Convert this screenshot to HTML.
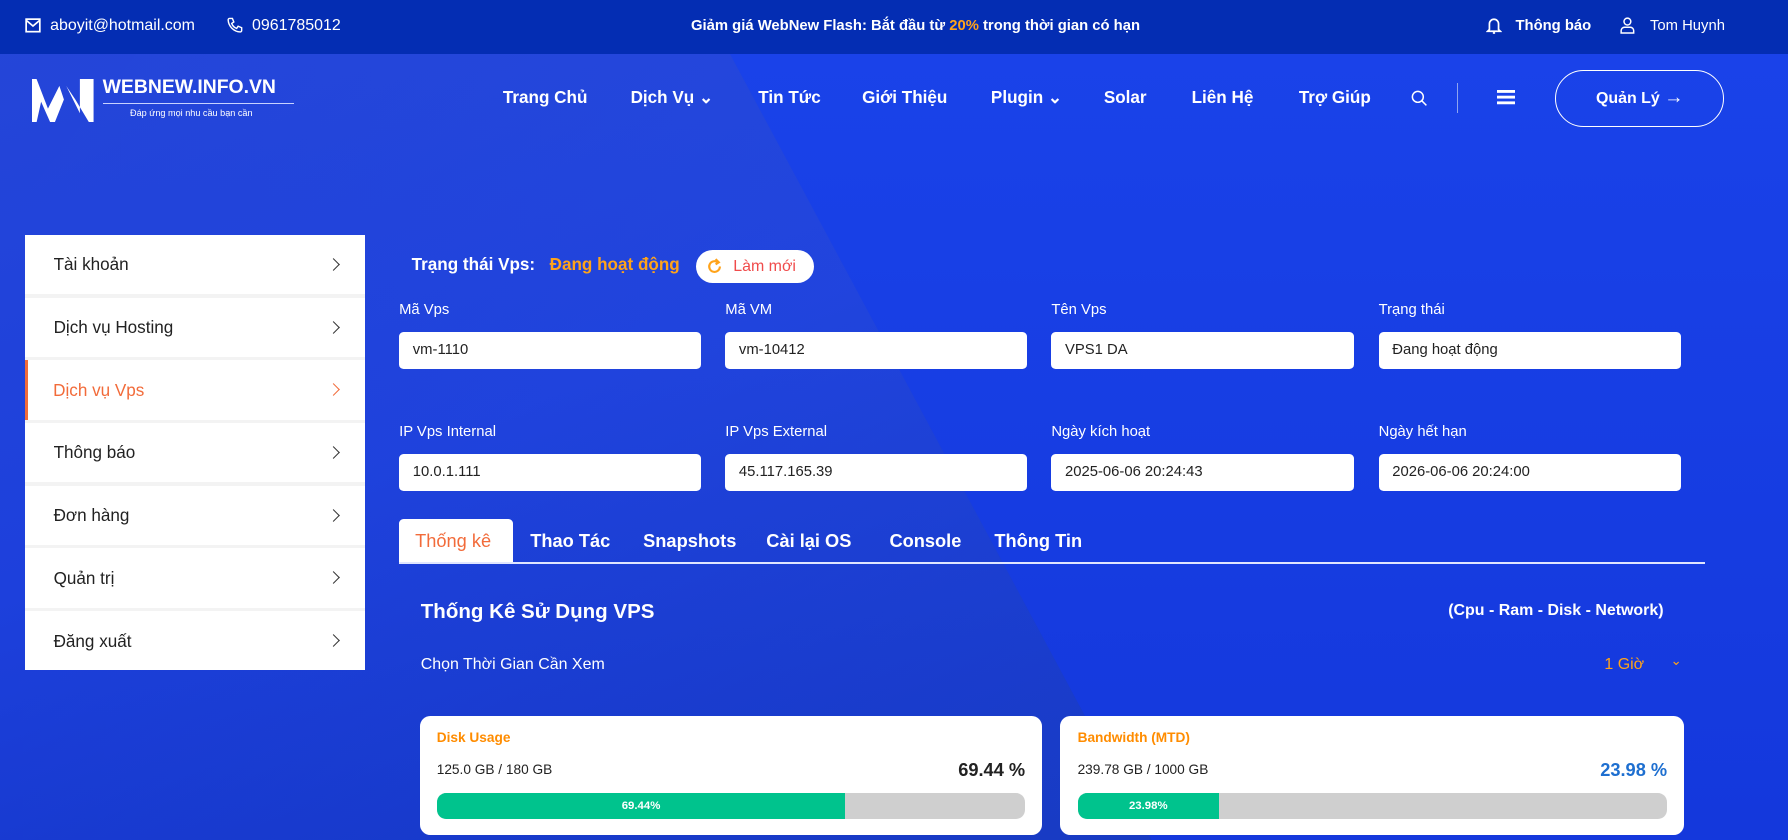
<!DOCTYPE html>
<html><head><meta charset="utf-8"><style>
*{margin:0;padding:0;box-sizing:border-box}
html,body{width:1788px;height:840px;overflow:hidden;background:#1a3cd8}
#w{zoom:1.14031;width:1568px;height:737px;position:relative;overflow:hidden;font-family:"Liberation Sans",sans-serif;color:#fff;
background:linear-gradient(160deg,#2546d8 0%,#1d40dc 40%,#1436c8 70%,#0f31b0 100%)}
.a{position:absolute;white-space:nowrap}
#band{position:absolute;left:0;top:0;width:1568px;height:737px;background:linear-gradient(90deg,rgba(60,100,230,.0),rgba(70,110,235,.2));clip-path:polygon(120px 47px,640px 47px,1010px 737px,0 737px,0 200px)}
#rt{position:absolute;left:0;top:0;width:1568px;height:737px;background:linear-gradient(180deg,#1a43ea,#1438dc);clip-path:polygon(640px 47px,1568px 47px,1568px 737px,1010px 737px)}
#top{position:absolute;left:0;top:0;width:1568px;height:47px;background:#042db3;font-size:14px}
.nav{font-size:15px;font-weight:bold;top:77px}
.side{position:absolute;left:22px;top:206px;width:298px;background:#f3f3f3}
.side div{height:52px;background:#fff;margin-bottom:3px;position:relative;font-size:15px;color:#222;padding:18px 0 0 25px}
.side div:last-child{margin-bottom:0}
.side div::after{content:"";position:absolute;right:24px;top:22px;width:7px;height:7px;border-right:1.6px solid #333;border-top:1.6px solid #333;transform:rotate(45deg)}
.side .act{color:#f26b3a;border-left:3px solid #f26b3a;padding-left:22px}
.side .act::after{border-color:#f26b3a}
.lb{font-size:13px}
.in{position:absolute;height:33px;background:#fff;border-radius:4px;color:#222;font-size:13px;padding:9px 0 0 12px;width:265px}
.tab{font-size:16px;font-weight:bold;top:465px}
.card{position:absolute;top:628px;height:104px;background:#fff;border-radius:9px;color:#222}
.bar{position:absolute;left:15px;right:15px;top:67px;height:23px;background:#cfcfcf;border-radius:8px;overflow:hidden}
.bar span{position:absolute;left:0;top:0;height:23px;background:#00c38d;color:#fff;font-size:10px;font-weight:bold;text-align:center;line-height:23px}
</style></head><body><div id="w">
<div id="band"></div><div id="rt"></div>
<div id="top">
<svg class="a" style="left:22px;top:16px" width="14" height="13" viewBox="0 0 14 13"><rect x="1" y="1" width="12" height="11" fill="none" stroke="#fff" stroke-width="1.5"/><path d="M1 2l6 5 6-5" fill="none" stroke="#fff" stroke-width="1.5"/></svg>
<div class="a" style="left:44px;top:15px">aboyit@hotmail.com</div>
<svg class="a" style="left:198px;top:15px" width="15" height="15" viewBox="0 0 24 24"><path d="M5 2h4l2 5-3 2a11 11 0 0 0 7 7l2-3 5 2v4a2 2 0 0 1-2 2A18 18 0 0 1 3 4a2 2 0 0 1 2-2z" fill="none" stroke="#fff" stroke-width="2"/></svg>
<div class="a" style="left:221px;top:15px">0961785012</div>
<div class="a" style="left:606px;top:16px;font-weight:bold;font-size:13px">Giảm giá WebNew Flash: Bắt đầu từ <span style="color:#ffa31a">20%</span> trong thời gian có hạn</div>
<svg class="a" style="left:1303px;top:15px" width="14" height="16" viewBox="0 0 14 16"><path d="M3 11V6a4 4 0 0 1 8 0v5l1.5 1.5h-11z" fill="none" stroke="#fff" stroke-width="1.5"/><path d="M6 14h2" stroke="#fff" stroke-width="1.5"/></svg>
<div class="a" style="left:1329px;top:16px;font-weight:bold;font-size:13px">Thông báo</div>
<svg class="a" style="left:1421px;top:15px" width="13" height="15" viewBox="0 0 13 15"><circle cx="6.5" cy="4" r="3" fill="none" stroke="#fff" stroke-width="1.3"/><path d="M1 14v-2a3 3 0 0 1 3-3h5a3 3 0 0 1 3 3v2z" fill="none" stroke="#fff" stroke-width="1.3"/></svg>
<div class="a" style="left:1447px;top:16px;font-size:13px">Tom Huynh</div>
</div>
<svg class="a" style="left:28px;top:69px" width="56" height="38" viewBox="0 0 56 38"><path d="M0 0h4l10 26L24 6l4 12-8 20h-4L8 20 4 38H0z" fill="#fff"/><path d="M30 6l12 24V0h12v38h-4L38 18z" fill="#fff"/></svg>
<div class="a" style="left:90px;top:67px;font-size:17px;font-weight:bold">WEBNEW.INFO.VN</div>
<div class="a" style="left:90px;top:90px;width:168px;height:1px;background:#c8d2ff"></div>
<div class="a" style="left:114px;top:95px;font-size:8px">Đáp ứng mọi nhu cầu bạn cần</div>
<div class="a nav" style="left:441px">Trang Chủ</div>
<div class="a nav" style="left:553px">Dịch Vụ ⌄</div>
<div class="a nav" style="left:665px">Tin Tức</div>
<div class="a nav" style="left:756px">Giới Thiệu</div>
<div class="a nav" style="left:869px">Plugin ⌄</div>
<div class="a nav" style="left:968px">Solar</div>
<div class="a nav" style="left:1045px">Liên Hệ</div>
<div class="a nav" style="left:1139px">Trợ Giúp</div>
<svg class="a" style="left:1237px;top:79px" width="15" height="15" viewBox="0 0 15 15"><circle cx="6" cy="6" r="4.8" fill="none" stroke="#fff" stroke-width="1.3"/><path d="M9.5 9.5l4 4" stroke="#fff" stroke-width="1.3"/></svg>
<div class="a" style="left:1278px;top:73px;width:1px;height:26px;background:#8ea4f0"></div>
<svg class="a" style="left:1313px;top:79px" width="16" height="13"><rect y="0" width="16" height="2.5" fill="#fff"/><rect y="5" width="16" height="2.5" fill="#fff"/><rect y="10" width="16" height="2.5" fill="#fff"/></svg>
<div class="a" style="left:1364px;top:61px;width:148px;height:50px;border:1.5px solid #fff;border-radius:25px;text-align:center;line-height:47px;font-size:14px;font-weight:bold">Quản Lý <span style="font-size:17px">→</span></div>

<div class="side"><div>Tài khoản</div><div>Dịch vụ Hosting</div><div class="act">Dịch vụ Vps</div><div>Thông báo</div><div>Đơn hàng</div><div>Quản trị</div><div>Đăng xuất</div></div>

<div class="a" style="left:361px;top:224px;font-size:15px;font-weight:bold">Trạng thái Vps:</div>
<div class="a" style="left:482px;top:224px;font-size:15px;font-weight:bold;color:#ffa31a">Đang hoạt động</div>
<div class="a" style="left:610px;top:219px;width:104px;height:29px;background:#fff;border-radius:15px;color:#f04b4b;font-size:14px;padding:7px 0 0 33px">Làm mới</div>
<svg class="a" style="left:619px;top:226px" width="15" height="15" viewBox="0 0 16 16"><path d="M13 8a5 5 0 1 1-2-4" fill="none" stroke="#ffa31a" stroke-width="2"/><path d="M9 1l3 3-3 2" fill="none" stroke="#ffa31a" stroke-width="2"/></svg>

<div class="a lb" style="left:350px;top:265px">Mã Vps</div><div class="a lb" style="left:636px;top:265px">Mã VM</div><div class="a lb" style="left:922px;top:265px">Tên Vps</div><div class="a lb" style="left:1209px;top:265px">Trạng thái</div>
<div class="in" style="left:350px;top:291px">vm-1110</div><div class="in" style="left:636px;top:291px">vm-10412</div><div class="in" style="left:922px;top:291px">VPS1 DA</div><div class="in" style="left:1209px;top:291px">Đang hoạt động</div>
<div class="a lb" style="left:350px;top:372px">IP Vps Internal</div><div class="a lb" style="left:636px;top:372px">IP Vps External</div><div class="a lb" style="left:922px;top:372px">Ngày kích hoạt</div><div class="a lb" style="left:1209px;top:372px">Ngày hết hạn</div>
<div class="in" style="left:350px;top:398px">10.0.1.111</div><div class="in" style="left:636px;top:398px">45.117.165.39</div><div class="in" style="left:922px;top:398px">2025-06-06 20:24:43</div><div class="in" style="left:1209px;top:398px">2026-06-06 20:24:00</div>

<div class="a" style="left:350px;top:455px;width:100px;height:39px;background:#fff;border-radius:4px 4px 0 0"></div>
<div class="a tab" style="left:364px;color:#f26b3a;font-weight:normal">Thống kê</div>
<div class="a tab" style="left:465px">Thao Tác</div>
<div class="a tab" style="left:564px">Snapshots</div>
<div class="a tab" style="left:672px">Cài lại OS</div>
<div class="a tab" style="left:780px">Console</div>
<div class="a tab" style="left:872px">Thông Tin</div>
<div class="a" style="left:350px;top:493px;width:1145px;height:1.5px;background:#dfe5ff"></div>

<div class="a" style="left:369px;top:526px;font-size:18px;font-weight:bold">Thống Kê Sử Dụng VPS</div>
<div class="a" style="left:1270px;top:528px;font-size:14px;font-weight:bold">(Cpu - Ram - Disk - Network)</div>
<div class="a" style="left:369px;top:575px;font-size:14px">Chọn Thời Gian Cần Xem</div>
<div class="a" style="left:1407px;top:575px;font-size:14px;color:#ffa31a">1 Giờ</div>
<div class="a" style="left:1465px;top:573px;font-size:12px;color:#ffa31a">⌄</div>

<div class="card" style="left:368px;width:546px">
<div class="a" style="left:15px;top:12px;font-size:12px;font-weight:bold;color:#ff8c00">Disk Usage</div>
<div class="a" style="left:15px;top:40px;font-size:12px">125.0 GB / 180 GB</div>
<div class="a" style="right:15px;top:38px;font-size:16px;font-weight:bold">69.44 %</div>
<div class="bar"><span style="width:69.44%">69.44%</span></div></div>
<div class="card" style="left:930px;width:547px">
<div class="a" style="left:15px;top:12px;font-size:12px;font-weight:bold;color:#ff8c00">Bandwidth (MTD)</div>
<div class="a" style="left:15px;top:40px;font-size:12px">239.78 GB / 1000 GB</div>
<div class="a" style="right:15px;top:38px;font-size:16px;font-weight:bold;color:#1e6fd0">23.98 %</div>
<div class="bar"><span style="width:23.98%">23.98%</span></div></div>
</div></body></html>
